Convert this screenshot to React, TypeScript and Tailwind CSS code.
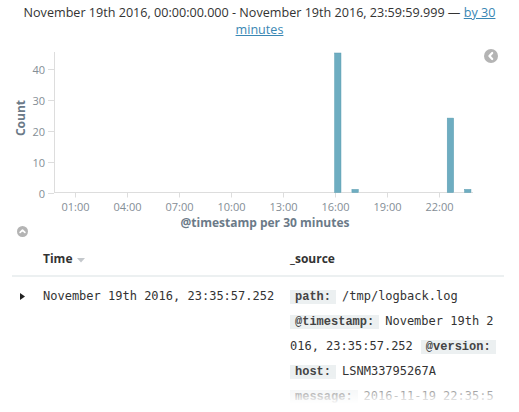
import React from "react";

const Y_TICKS = [0, 10, 20, 30, 40];
const X_TICKS = [1, 4, 7, 10, 13, 16, 19, 22];

// half-hour slot index -> count
const BARS = [
  { slot: 32, count: 45 },
  { slot: 34, count: 1 },
  { slot: 45, count: 24 },
  { slot: 47, count: 1 },
];

const X0 = 57.3;
const SLOT = 8.665;
const BASE = 152.5;
const PER = 3.1;

function Histogram() {
  return (
    <svg width={519} height={186} overflow="visible" className="block" fontFamily="'Open Sans', sans-serif">
      {/* y axis */}
      <line x1={54.5} y1={12} x2={54.5} y2={BASE} stroke="#dddddd" />
      {Y_TICKS.map((v) => {
        const y = Math.round(BASE - v * PER) + 0.5;
        return (
          <g key={v}>
            <line x1={48} y1={y} x2={54} y2={y} stroke="#dddddd" />
            <text x={45} y={y} textAnchor="end" dominantBaseline="central" fontSize={11} fill="#848e96">
              {v}
            </text>
          </g>
        );
      })}
      <text
        transform="translate(20 78) rotate(-90)"
        textAnchor="middle"
        dominantBaseline="central"
        fontSize={12}
        fontWeight={700}
        fill="#6b7a88"
      >
        Count
      </text>

      {/* x axis */}
      <line x1={54} y1={BASE} x2={473} y2={BASE} stroke="#dddddd" />
      {X_TICKS.map((h) => {
        const x = Math.round(X0 + h * 2 * SLOT) + 0.5;
        return (
          <g key={h}>
            <line x1={x} y1={BASE} x2={x} y2={BASE + 5} stroke="#dddddd" />
            <text x={x} y={166} textAnchor="middle" dominantBaseline="central" fontSize={11} fill="#848e96">
              {String(h).padStart(2, "0")}:00
            </text>
          </g>
        );
      })}
      <text x={265} y={182} textAnchor="middle" dominantBaseline="central" fontSize={12} fontWeight={700} fill="#6b7a88">
        @timestamp per 30 minutes
      </text>

      {BARS.map((b) => {
        const h = b.count * PER;
        return (
          <rect
            key={b.slot}
            x={X0 + b.slot * SLOT}
            y={BASE - h}
            width={6.4}
            height={h}
            fill="#6eadc1"
            stroke="#5b9db2"
            strokeWidth={0.5}
          />
        );
      })}
    </svg>
  );
}

function CircleChevron({ dir, size }: { dir: "left" | "up"; size: number }) {
  const pts = dir === "left" ? "8.2,4 5.4,7 8.2,10" : "4,8.2 7,5.4 10,8.2";
  return (
    <svg width={size} height={size} viewBox="0 0 14 14" className="block">
      <circle cx={7} cy={7} r={7} fill="#b4b4b4" />
      <polyline points={pts} fill="none" stroke="#ffffff" strokeWidth={2.2} strokeLinecap="round" strokeLinejoin="round" />
    </svg>
  );
}

const dt = "whitespace-nowrap bg-[#ecf0f1] px-[5px] font-['Liberation_Mono',monospace] font-bold text-[#444]";
const dd = "ml-[6px] mr-[8px]";

export default function App() {
  return (
    <div className="h-[412px] w-[519px] overflow-hidden bg-white font-['Open_Sans',sans-serif] text-[#333]">
      <div className="px-[20px] pt-[4px] text-center text-[12.6px] leading-[17px]">
        November 19th 2016, 00:00:00.000 - November 19th 2016, 23:59:59.999 —{" "}
        <a href="#" className="text-[#3a87b4] underline">
          by 30 minutes
        </a>
      </div>

      <div className="relative mt-[2px]">
        <Histogram />
        <div className="absolute right-[21px] top-[9px]">
          <CircleChevron dir="left" size={14} />
        </div>
      </div>

      <div className="ml-[17px]">
        <CircleChevron dir="up" size={11} />
      </div>

      <div className="mx-[12px] w-[492px]">
        <div className="grid grid-cols-[31px_247px_1fr] border-b-2 border-[#ecf0f1] pb-[8px] pt-[13px] text-[12px] font-bold leading-[17px]">
          <div />
          <div className="flex items-center gap-[5px]">
            Time
            <svg width={8} height={5} viewBox="0 0 8 5" className="mt-[3px]">
              <polygon points="0,0 8,0 4,4.5" fill="#c4c8cc" />
            </svg>
          </div>
          <div>_source</div>
        </div>

        <div className="grid grid-cols-[31px_247px_1fr] pt-[7px] font-['DejaVu_Sans_Mono',monospace] text-[12px] leading-6">
          <div className="flex h-6 items-center pl-[8px]">
            <svg width={5} height={7} viewBox="0 0 5 7">
              <polygon points="0,0 5,3.5 0,7" fill="#222" />
            </svg>
          </div>
          <div>November 19th 2016, 23:35:57.252</div>
          <div className="relative max-h-[120px] overflow-hidden pr-[7px] break-all">
            <span className={dt}>path:</span>
            <span className={dd}>/tmp/logback.log</span>
            <span className={dt}>@timestamp:</span>
            <span className={dd}>November 19th 2016, 23:35:57.252</span>
            <span className={dt}>@version:</span>
            <span className={dt}>host:</span>
            <span className={dd}>LSNM33795267A</span>
            <span className={dt}>message:</span>
            <span className={dd}>2016-11-19 22:35:57.252 INFO com.example.Application - Started Application in 4.2 seconds</span>
            <div className="absolute inset-x-0 bottom-0 h-[28px] bg-gradient-to-b from-white/0 to-white" />
          </div>
        </div>
      </div>
    </div>
  );
}
